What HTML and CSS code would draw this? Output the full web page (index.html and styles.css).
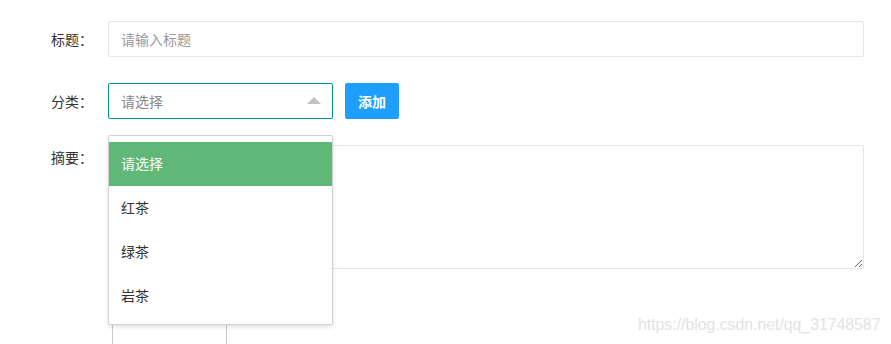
FILE: index.html
```html
<!DOCTYPE html>
<html lang="zh-CN">
<head>
  <meta charset="UTF-8">
  <title>添加文章</title>
  <link rel="stylesheet" href="styles.css">
</head>
<body>

  <form class="article-form">
    <div class="form-item">
      <label class="form-label">标题：</label>
      <div class="input-block">
        <input class="text-input" type="text" placeholder="请输入标题">
      </div>
    </div>

    <div class="form-item">
      <label class="form-label">分类：</label>
      <div class="input-inline">
        <div class="select">
          <div class="select-title">
            <span>请选择</span>
            <i class="edge"></i>
          </div>
          <!-- opened option list -->
          <dl class="select-options">
            <dd class="selected">请选择</dd>
            <dd>红茶</dd>
            <dd>绿茶</dd>
            <dd>岩茶</dd>
          </dl>
        </div>
        <button type="button" class="btn">添加</button>
      </div>
    </div>

    <div class="form-item">
      <label class="form-label form-label-top">摘要：</label>
      <div class="input-block">
        <textarea class="textarea"></textarea>
      </div>
    </div>

    <div class="form-item last">
      <span class="form-label"></span>
      <div class="upload-box"></div>
    </div>
  </form>

  <div class="watermark">https://blog.csdn.net/qq_31748587</div>

</body>
</html>
```

FILE: styles.css
```css
body {
  margin: 0;
  font-family: "Microsoft YaHei", "Noto Sans CJK SC", sans-serif;
  font-size: 14px;
  color: #333;
  background: #fff;
  overflow: hidden;
  height: 344px;
}

.article-form {
  padding: 21px 27px 0 0;
}

.form-item {
  display: flex;
  align-items: flex-start;
  margin-bottom: 26px;
}

.form-item.last {
  margin-bottom: 0;
}

.form-label {
  width: 93px;
  flex-shrink: 0;
  padding-right: 15px;
  text-align: right;
  line-height: 36px;
  height: 36px;
}

.form-label-top {
  line-height: 24px;
}

.input-block {
  flex: 1;
}

.text-input {
  box-sizing: border-box;
  width: 100%;
  height: 36px;
  border: 1px solid #e6e6e6;
  border-radius: 2px;
  padding: 0 12px;
  font: inherit;
  color: #333;
  outline: none;
}

.text-input::placeholder {
  color: #999;
}

.input-inline {
  display: flex;
  gap: 12px;
}

.select {
  position: relative;
  width: 225px;
}

.select-title {
  box-sizing: border-box;
  height: 36px;
  border: 1px solid #009688;
  border-radius: 2px;
  padding: 0 12px;
  line-height: 34px;
  color: #888;
  display: flex;
  justify-content: space-between;
  align-items: center;
}

.edge {
  width: 0;
  height: 0;
  border-style: solid;
  border-width: 0 7px 7px;
  border-color: transparent transparent #c2c2c2;
  margin-right: -1px;
  margin-top: -1px;
}

.select-options {
  position: absolute;
  top: 52px;
  left: 0;
  right: 0;
  margin: 0;
  padding: 6px 0;
  background: #fff;
  border: 1px solid #d2d2d2;
  border-radius: 2px;
  box-shadow: 0 2px 4px rgba(0, 0, 0, 0.12);
  z-index: 10;
}

.select-options dd {
  margin: 0;
  padding: 0 12px;
  height: 44px;
  line-height: 43px;
  color: #333;
}

.select-options dd.selected {
  background: #5fb878;
  color: #fff;
}

.btn {
  width: 54px;
  height: 36px;
  border: none;
  border-radius: 2px;
  background: #1e9fff;
  color: #fff;
  font: inherit;
  font-weight: bold;
  padding: 0;
}

.textarea {
  box-sizing: border-box;
  display: block;
  width: 100%;
  height: 124px;
  border: 1px solid #e6e6e6;
  border-radius: 2px;
  padding: 8px 12px;
  font: inherit;
  outline: none;
}

.upload-box {
  margin-left: 4px;
  margin-top: -14px;
  width: 115px;
  height: 64px;
  border: 1px solid #c8c8c8;
  border-bottom: none;
  box-sizing: border-box;
}

.watermark {
  position: absolute;
  left: 638px;
  top: 316px;
  font-family: "Liberation Sans", Arial, sans-serif;
  font-size: 15.8px;
  color: #e3e3e3;
}
```
